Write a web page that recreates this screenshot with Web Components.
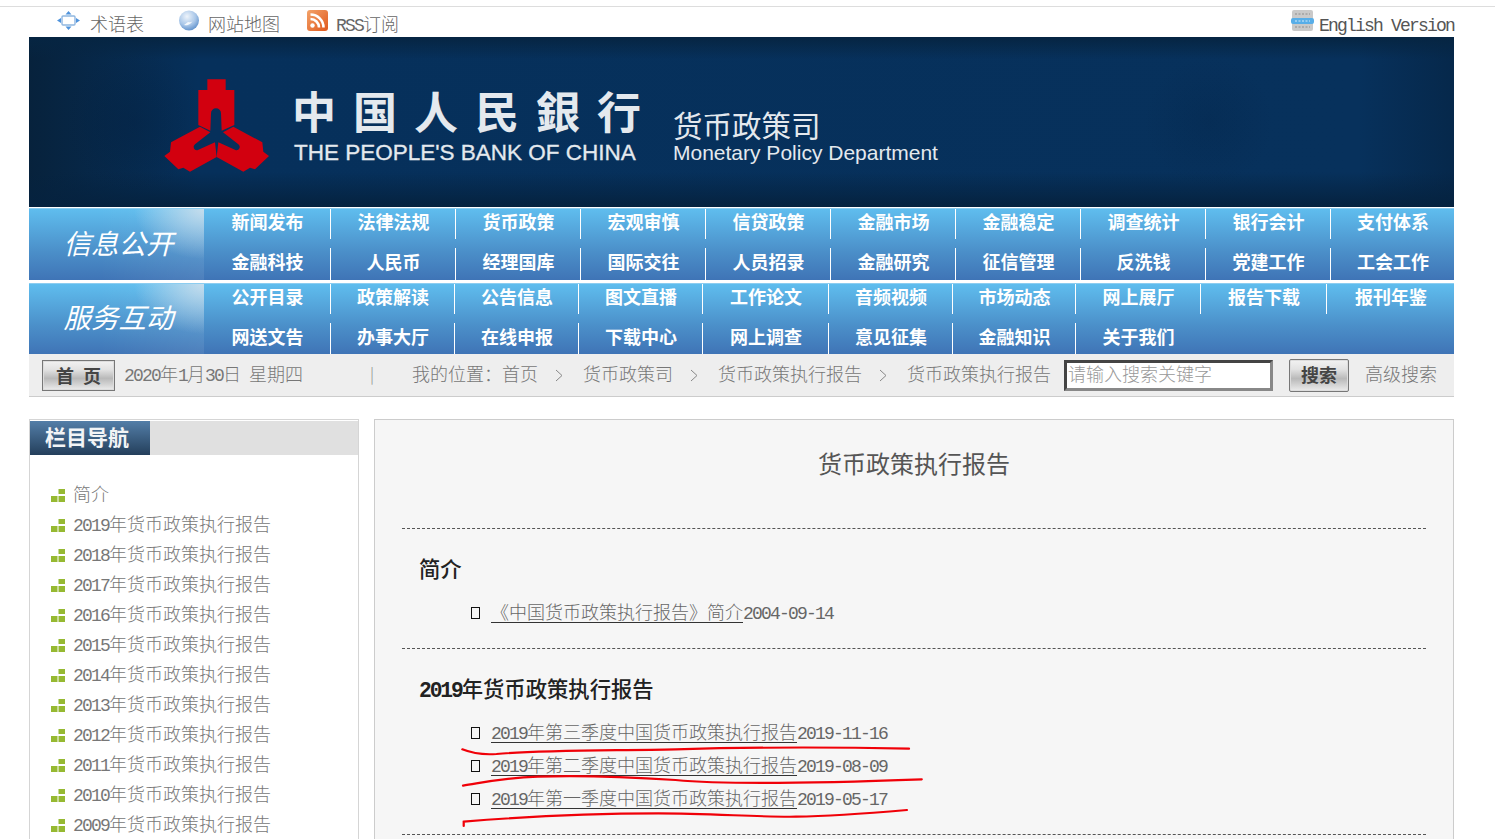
<!DOCTYPE html>
<html lang="zh-CN">
<head>
<meta charset="utf-8">
<title>货币政策执行报告</title>
<style>
  html, body { margin: 0; padding: 0; height: 839px; overflow: hidden; background: #fff; }
  body { font-family: "Noto Sans CJK SC", sans-serif; font-weight: 300; color: #666; font-size: 18px; }
</style>
</head>
<body>
<pb-page>
  <pb-topbar></pb-topbar>
  <pb-banner></pb-banner>
  <pb-nav-band style="margin-top:1px" label="信息公开" cols="126px repeat(8, 125px) 124px" rows="30px 32px"
    items="新闻发布,法律法规,货币政策,宏观审慎,信贷政策,金融市场,金融稳定,调查统计,银行会计,支付体系,金融科技,人民币,经理国库,国际交往,人员招录,金融研究,征信管理,反洗钱,党建工作,工会工作"></pb-nav-band>
  <pb-nav-band style="margin-top:3px" label="服务互动" cols="126px 124px 124px 124px 126px 124px 123px 125px 126px 128px" rows="30px 31px"
    items="公开目录,政策解读,公告信息,图文直播,工作论文,音频视频,市场动态,网上展厅,报告下载,报刊年鉴,网送文告,办事大厅,在线申报,下载中心,网上调查,意见征集,金融知识,关于我们"></pb-nav-band>
  <pb-toolbar></pb-toolbar>
  <pb-content>
    <pb-sidebar slot="side"></pb-sidebar>
    <pb-main slot="main" heading="货币政策执行报告">
      <pb-section heading="简介">
        <pb-report title="《中国货币政策执行报告》简介" date="2004-09-14"></pb-report>
      </pb-section>
      <pb-section heading="2019年货币政策执行报告">
        <pb-report title="2019年第三季度中国货币政策执行报告" date="2019-11-16"></pb-report>
        <pb-report title="2019年第二季度中国货币政策执行报告" date="2019-08-09"></pb-report>
        <pb-report title="2019年第一季度中国货币政策执行报告" date="2019-05-17"></pb-report>
      </pb-section>
    </pb-main>
  </pb-content>
</pb-page>

<script>
// the source page sets latin text at half the width of the cjk text
const LATIN_CSS = `.m { font-family: "Liberation Mono", monospace; letter-spacing: -.1em; line-height: 1; }`;
const latin = text => text.replace(/[\x21-\x7e]+( [\x21-\x7e]+)*/g, m => `<span class="m">${m}</span>`);

class PbPage extends HTMLElement {
  constructor() {
    super();
    this.attachShadow({ mode: 'open' });
    this.shadowRoot.innerHTML = `
      <style>
        :host { display: block; padding: 6px 41px 0 29px; }
        .rule { height: 1px; background: #ddd; margin: 0 -41px 0 -29px; }
      </style>
      <div class="rule"></div>
      <slot></slot>
    `;
  }
}

class PbTopbar extends HTMLElement {
  constructor() {
    super();
    this.attachShadow({ mode: 'open' });
    this.shadowRoot.innerHTML = `
      <style>
        :host { display: flex; height: 30px; align-items: center; padding-left: 28px; color: #666; }
        ${LATIN_CSS}
        .item { display: flex; align-items: center; }
        svg { display: block; margin-top: -4px; }
        .text { margin-top: 2px; line-height: 26px; }
        .gloss { margin-right: 35px; }
        .gloss svg { margin-right: 10px; }
        .map { margin-right: 27px; }
        .map svg { margin-right: 9px; }
        .rss svg { margin-right: 8px; }
        .en { margin-left: auto; color: #555; }
        .en svg { margin-right: 5px; }
      </style>
      <div class="item gloss">
        <svg width="23" height="21" viewBox="0 0 23 21">
          <path d="M11.5 1l3 3.5h-6zM11.5 20l3-3.5h-6zM0 10.5l4-2.5v5zM23 10.5l-4-2.5v5z" fill="#4f93dc"/>
          <rect x="5" y="6" width="13" height="9" rx="1" fill="#fff" stroke="#8fb6e0" stroke-width="1.4"/>
        </svg>
        <span class="text">术语表</span>
      </div>
      <div class="item map">
        <svg width="20" height="21" viewBox="0 0 20 21">
          <defs><radialGradient id="g" cx=".4" cy=".3" r=".8"><stop offset="0" stop-color="#eef4fb"/><stop offset=".55" stop-color="#a8c6e8"/><stop offset="1" stop-color="#4d83c4"/></radialGradient></defs>
          <circle cx="10" cy="10.5" r="10" fill="url(#g)"/>
          <path d="M5 15c4 1 8-1 10-7-1 4-3 5-6 4z" fill="#fff" opacity=".85"/>
        </svg>
        <span class="text">网站地图</span>
      </div>
      <div class="item rss">
        <svg width="21" height="21" viewBox="0 0 21 21">
          <defs><linearGradient id="o" x1="0" y1="0" x2="1" y2="1"><stop offset="0" stop-color="#f3a36a"/><stop offset="1" stop-color="#e0581c"/></linearGradient></defs>
          <rect width="21" height="21" rx="3" fill="url(#o)"/>
          <circle cx="5.5" cy="15.5" r="2.2" fill="#fff"/>
          <path d="M3.5 9a8.5 8.5 0 0 1 8.5 8.5M3.5 4.5a13 13 0 0 1 13 13" fill="none" stroke="#fff" stroke-width="2.6"/>
        </svg>
        <span class="text">${latin('RSS订阅')}</span>
      </div>
      <div class="item en">
        <svg width="23" height="21" viewBox="0 0 23 21">
          <rect x="1" y="0" width="21" height="21" rx="2" fill="#c9c9c9"/>
          <path d="M4 4h15M4 17h15" stroke="#8d8d8d" stroke-dasharray="2 1.5"/>
          <rect x="0" y="8" width="23" height="6" rx="2" fill="#58aee8"/>
          <path d="M4 11h15" stroke="#d5ecfb" stroke-dasharray="2 1.5"/>
        </svg>
        <span class="text">${latin('English Version')}</span>
      </div>
    `;
  }
}

class PbBanner extends HTMLElement {
  constructor() {
    super();
    this.attachShadow({ mode: 'open' });
    this.shadowRoot.innerHTML = `
      <style>
        :host {
          display: flex; box-sizing: border-box; height: 170px; padding: 33px 0 0 126px; color: #e4e9ee;
          background:
            radial-gradient(circle at 105px 85px, rgba(2,30,62,.3), transparent 70px),
            radial-gradient(circle at 1180px 85px, rgba(2,30,62,.2), transparent 65px),
            linear-gradient(180deg, #062542 0, transparent 22px, transparent 135px, #05223f 170px),
            linear-gradient(90deg, #07223c 0, #06305b 170px, #07315c 1330px, #06284b 1425px),
            #07315c;
        }
        svg { display: block; flex: none; }
        .org { margin-left: 12px; width: 381px; }
        .cn { font-size: 44px; font-weight: 700; letter-spacing: 17px; line-height: 42px; margin-top: 19px; white-space: nowrap; }
        .en {
          font-family: "Liberation Sans", sans-serif; font-size: 22.5px; line-height: 28px; margin: 8px 0 0 2px;
          white-space: nowrap; -webkit-text-stroke: .3px #e4e9ee;
        }
        .dept-cn { font-size: 29.5px; font-weight: 400; line-height: 34px; margin-top: 37px; }
        .dept-en { font-family: "Liberation Sans", sans-serif; font-size: 21px; line-height: 24px; white-space: nowrap; }
      </style>
      <svg width="125" height="110" viewBox="0 0 375 330">
        <g fill="#d2000f">
          <path d="M157 28h55v32h26v105l-38 17-2-52a15 15 0 0 0-30 0l-2 52-36-17V60h27z"/>
          <path d="M135 170l31 17-46 36a10 10 0 0 0 7 18l53-24 5 44-80 44-20-12-15 5-42-40 17-13 3-28z"/>
          <path d="M235 170l-31 17 46 36a10 10 0 0 1-7 18l-53-24-5 44 80 44 20-12 15 5 42-40-17-13-3-28z"/>
        </g>
      </svg>
      <div class="org">
        <div class="cn">中国人民銀行</div>
        <div class="en">THE PEOPLE'S BANK OF CHINA</div>
      </div>
      <div class="dept">
        <div class="dept-cn">货币政策司</div>
        <div class="dept-en">Monetary Policy Department</div>
      </div>
    `;
  }
}

class PbNavBand extends HTMLElement {
  constructor() {
    super();
    this.attachShadow({ mode: 'open' });
  }

  connectedCallback() {
    const items = this.getAttribute('items').split(',');
    this.shadowRoot.innerHTML = `
      <style>
        :host {
          display: flex; color: #fff;
          background: linear-gradient(180deg, #5fbdee 0, #4b8fc9 60%, #3f74b6 100%);
          border-top: 1px solid #8ccdf0;
        }
        .label {
          flex: none; width: 175px; display: flex; align-items: center; justify-content: center;
          font-size: 27.5px; font-style: italic; font-weight: 400; padding: 0 0 6px 4px; box-sizing: border-box;
          background: radial-gradient(ellipse 70px 50px at 100% 0, rgba(220,228,236,.8), transparent), linear-gradient(270deg, rgba(255,255,255,.08), transparent 60%);
        }
        .cells {
          flex: 1; display: grid; row-gap: 9px;
          grid-template-columns: ${this.getAttribute('cols')};
          grid-template-rows: ${this.getAttribute('rows')};
        }
        .cell {
          display: flex; align-items: center; justify-content: center; box-sizing: border-box;
          font-size: 18px; font-weight: 700; padding: 0 0 6px 1px; white-space: nowrap;
        }
        .cell + .cell { border-left: 1px solid #fff; }
        .cell:nth-child(11) { border-left: 0; }
      </style>
      <div class="label">${this.getAttribute('label')}</div>
      <div class="cells">
        ${items.map(t => `<div class="cell">${t}</div>`).join('')}
      </div>
    `;
  }
}

class PbToolbar extends HTMLElement {
  constructor() {
    super();
    this.attachShadow({ mode: 'open' });
    const chevron = `<svg class="chev" width="8" height="13" viewBox="0 0 8 13"><path d="M1 1l6 5.5-6 5.5" fill="none" stroke="#888" stroke-width="1"/></svg>`;
    this.shadowRoot.innerHTML = `
      <style>
        :host {
          display: flex; align-items: center; box-sizing: border-box; height: 43px; padding-left: 13px;
          background: #eee; border-bottom: 1px solid #ccc; color: #777; white-space: nowrap;
        }
        ${LATIN_CSS}
        .btn {
          box-sizing: border-box; display: flex; align-items: center; justify-content: center;
          border: 1px solid #777; box-shadow: inset 0 0 0 1px #ddd; font-weight: 700; color: #444;
          background: linear-gradient(180deg, #f2f2f2 0, #e2e2e2 30%, #b9b9b9 60%, #ececec 100%);
        }
        .home { width: 73px; height: 31px; word-spacing: 5px; padding-bottom: 1px; }
        .date { margin-left: 9px; white-space: pre; padding-bottom: 5px; }
        .bar { margin-left: 67px; color: #888; font-size: 16px; padding-bottom: 5px; }
        .crumbs { display: flex; align-items: center; margin-left: 38px; }
        .crumbs span { padding-bottom: 5px; }
        .chev { margin: 0 20px 0 17px; }
        .search {
          box-sizing: border-box; width: 209px; height: 31px; margin-left: 13px; padding-left: 1px; background: #fff; color: #999;
          border: 3px solid; border-color: #444 #888 #888 #444; line-height: 20px;
        }
        .go { width: 60px; height: 33px; margin-left: 16px; border-radius: 2px; padding-bottom: 2px; }
        .adv { margin-left: 16px; padding-bottom: 4px; }
      </style>
      <div class="btn home">首 页</div>
      <div class="date">${latin('2020年1月30日')}  星期四</div>
      <span class="bar">|</span>
      <div class="crumbs">
        <span>我的位置：首页</span>${chevron}<span>货币政策司</span>${chevron}<span>货币政策执行报告</span>${chevron}<span>货币政策执行报告</span>
      </div>
      <div class="search">请输入搜索关键字</div>
      <div class="btn go">搜索</div>
      <div class="adv">高级搜索</div>
    `;
  }
}

class PbContent extends HTMLElement {
  constructor() {
    super();
    this.attachShadow({ mode: 'open' });
    this.shadowRoot.innerHTML = `
      <style>
        :host { display: grid; grid-template-columns: 330px 1080px; column-gap: 15px; margin-top: 22px; height: 420px; }
      </style>
      <slot name="side"></slot>
      <slot name="main"></slot>
    `;
  }
}

class PbSidebar extends HTMLElement {
  constructor() {
    super();
    this.attachShadow({ mode: 'open' });
    const names = ['简介'];
    for (let y = 2019; y >= 2009; y--) names.push(`${y}年货币政策执行报告`);
    this.shadowRoot.innerHTML = `
      <style>
        :host { display: block; box-sizing: border-box; border: 1px solid #d5d5d5; border-bottom: 0; padding-top: 1px; color: #777; }
        ${LATIN_CSS}
        .head { height: 34px; background: #e0e0e0; }
        .tab {
          width: 120px; height: 34px; box-sizing: border-box; padding-left: 15px; line-height: 30px; color: #f2f4f6;
          font-size: 21px; font-weight: 700; background: linear-gradient(180deg, #537ea8, #243f5b);
        }
        ul { list-style: none; margin: 0; padding: 25px 0 0 21px; }
        li { display: flex; align-items: center; height: 30px; white-space: nowrap; }
        li span:not(.m) { line-height: 24px; padding-bottom: 4px; }
        svg { flex: none; margin-right: 8px; }
      </style>
      <div class="head"><div class="tab">栏目导航</div></div>
      <ul>
        ${names.map(n => `<li><svg width="14" height="13" viewBox="0 0 14 13"><path d="M7.5 0H14v5H7.5zM0 7h6.5v6H0zM7.5 7H14v6H7.5z" fill="#96b932"/></svg><span>${latin(n)}</span></li>`).join('')}
      </ul>
    `;
  }
}

class PbMain extends HTMLElement {
  constructor() {
    super();
    this.attachShadow({ mode: 'open' });
  }

  connectedCallback() {
    this.shadowRoot.innerHTML = `
      <style>
        :host {
          display: block; position: relative; box-sizing: border-box; padding: 0 27px;
          background: #f6f6f6; border: 1px solid #ccc; border-bottom: 0;
        }
        h1 {
          margin: 0; padding-top: 25px; height: 108px; box-sizing: border-box; text-align: center; font-size: 24px; font-weight: 400;
          line-height: 36px; color: #555;
        }
        /* hand drawn marks lying over the report rows */
        svg { position: absolute; left: 25px; top: 170px; pointer-events: none; }
      </style>
      <h1>${this.getAttribute('heading')}</h1>
      <slot></slot>
      <svg width="540" height="249" viewBox="0 0 1568 747" preserveAspectRatio="none">
        <g fill="none" stroke="#f00008" stroke-width="6.5" stroke-linecap="round">
          <path d="M181 478C210 490 240 495 280 492C400 480 600 482 800 478C1000 472 1200 470 1478 476"/>
          <path d="M183 587C240 578 300 563 400 560C540 555 680 562 800 570C920 582 1200 580 1515 568"/>
          <path d="M185 708V695C300 685 500 670 750 670C900 670 1050 682 1150 680C1260 678 1380 668 1472 660"/>
        </g>
      </svg>
    `;
  }
}

class PbSection extends HTMLElement {
  constructor() {
    super();
    this.attachShadow({ mode: 'open' });
  }

  connectedCallback() {
    this.shadowRoot.innerHTML = `
      <style>
        :host { display: block; border-top: 1px dashed #555; padding: 25px 0 19px; }
        :host(:last-of-type) { border-bottom: 1px dashed #555; }
        ${LATIN_CSS}
        h2 {
          box-sizing: border-box; height: 30px; margin: 0 0 12px 17px; padding-bottom: 2px;
          font-size: 21.33px; line-height: 28px; font-weight: 500; color: #222;
        }
        h2 .m { font-weight: 700; }
      </style>
      <h2>${latin(this.getAttribute('heading'))}</h2>
      <slot></slot>
    `;
  }
}

class PbReport extends HTMLElement {
  constructor() {
    super();
    this.attachShadow({ mode: 'open' });
  }

  connectedCallback() {
    this.shadowRoot.innerHTML = `
      <style>
        :host { display: flex; align-items: center; height: 33px; padding-left: 69px; color: #666; white-space: nowrap; }
        ${LATIN_CSS}
        i { display: block; box-sizing: border-box; width: 9px; height: 12px; margin-right: 11px; border: 1.5px solid #111; }
        a { color: #666; line-height: 24px; margin-bottom: 4px; text-decoration: underline; text-decoration-color: #333; text-underline-offset: 3px; }
        .date { line-height: 24px; margin-bottom: 4px; }
      </style>
      <i></i><a href="#">${latin(this.getAttribute('title'))}</a><span class="date">${latin(this.getAttribute('date'))}</span>
    `;
  }
}

customElements.define('pb-page', PbPage);
customElements.define('pb-topbar', PbTopbar);
customElements.define('pb-banner', PbBanner);
customElements.define('pb-nav-band', PbNavBand);
customElements.define('pb-toolbar', PbToolbar);
customElements.define('pb-content', PbContent);
customElements.define('pb-sidebar', PbSidebar);
customElements.define('pb-main', PbMain);
customElements.define('pb-section', PbSection);
customElements.define('pb-report', PbReport);
</script>
</body>
</html>
